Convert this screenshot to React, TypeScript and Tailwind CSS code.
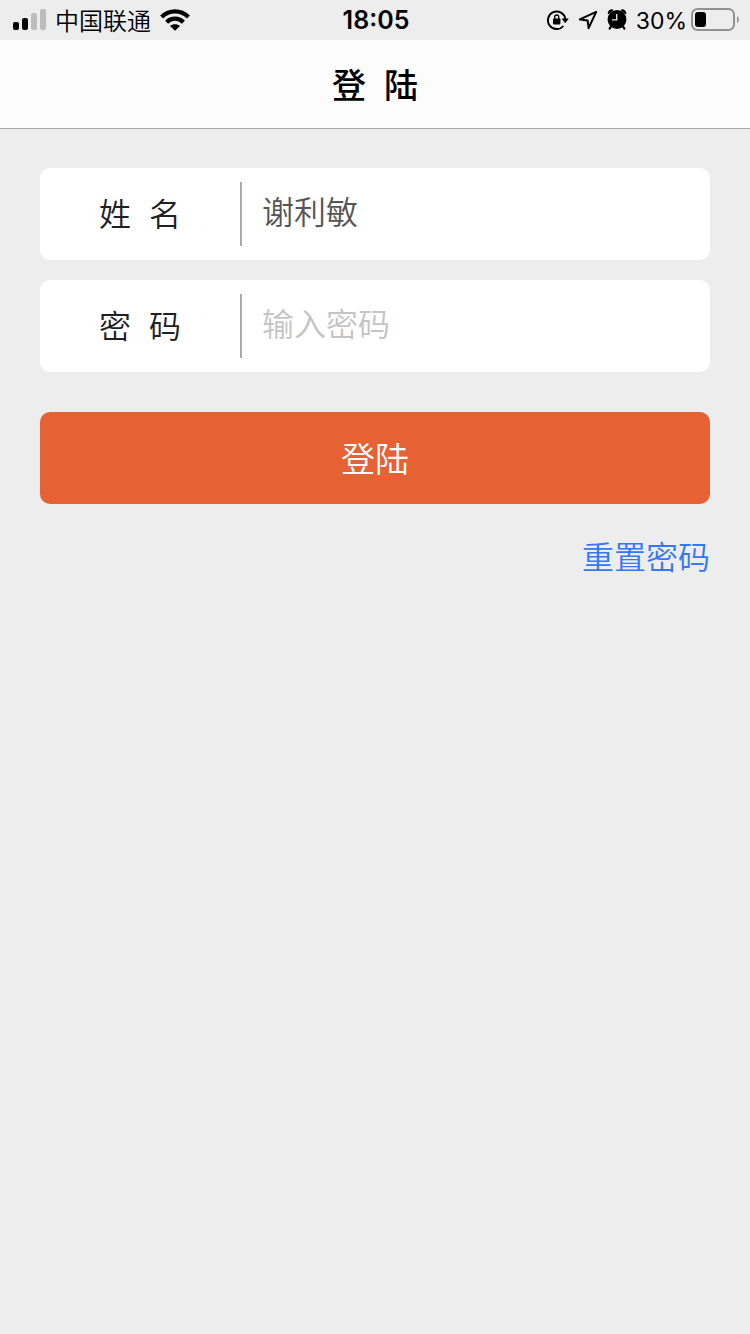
import { useState, type ReactNode } from "react";

function SignalIcon() {
  return (
    <svg viewBox="0 0 33 22" className="h-[22px] w-[33px]" aria-hidden="true">
      <rect x="0" y="13" width="6" height="8" rx="2" fill="#000" />
      <rect x="9" y="9" width="6" height="12" rx="2" fill="#000" />
      <rect x="18" y="4" width="6" height="17" rx="2" fill="#bdbdbd" />
      <rect x="27" y="0" width="6" height="21" rx="2" fill="#bdbdbd" />
    </svg>
  );
}

function WifiIcon() {
  return (
    <svg viewBox="0 0 30 22" className="h-[22px] w-[30px]" aria-hidden="true">
      <g fill="none" stroke="#000" strokeWidth="4.2">
        <path d="M1.6 8C9.4.4 20.6.4 28.4 8" />
        <path d="M6.6 13.2C11.3 8.5 18.7 8.5 23.4 13.2" />
      </g>
      <path d="M10 17.1C12.8 14.5 17.2 14.5 20 17.1L15 21.8Z" fill="#000" />
    </svg>
  );
}

function RotationLockIcon() {
  return (
    <svg viewBox="0 0 22 20" className="h-5 w-[22px]" aria-hidden="true">
      <path d="M16.4 16A8.8 8.8 0 1 1 18.4 8.8" fill="none" stroke="#000" strokeWidth="1.9" />
      <path d="M14.6 8.6h7.2l-3.6 4.7Z" fill="#000" />
      <rect x="6" y="8.4" width="7.4" height="6" rx=".8" fill="#000" />
      <path d="M7.7 9V7a2 2 0 0 1 4 0v2" fill="none" stroke="#000" strokeWidth="1.4" />
    </svg>
  );
}

function LocationIcon() {
  return (
    <svg viewBox="0 0 20 20" className="h-5 w-5" aria-hidden="true">
      <path d="M18.2 1.8 1.8 9.4l7.9 1.2.9 7.6Z" fill="none" stroke="#000" strokeWidth="2" strokeLinejoin="round" />
    </svg>
  );
}

function AlarmIcon() {
  return (
    <svg viewBox="0 0 20 22" className="h-[22px] w-5" aria-hidden="true">
      <circle cx="10" cy="10.5" r="9.4" fill="#000" />
      <path d="M.6 4.4A4.4 4.4 0 0 1 5.4.2L6.4 1.2 1.6 5.2ZM19.4 4.4A4.4 4.4 0 0 0 14.6.2L13.6 1.2 18.4 5.2Z" fill="#000" />
      <path d="M4.2 17.2 2.6 19.6M15.8 17.2l1.6 2.4" fill="none" stroke="#000" strokeWidth="2.1" strokeLinecap="round" />
      <path d="M9.7 5v5.8H5" fill="none" stroke="#ededed" strokeWidth="1.3" />
    </svg>
  );
}

function BatteryIcon() {
  return (
    <svg viewBox="0 0 48 24" className="h-6 w-12" aria-hidden="true">
      <rect x="1" y="1" width="42" height="21" rx="5.5" fill="none" stroke="#929292" strokeWidth="2" />
      <rect x="4" y="4" width="11" height="15" rx="3" fill="#000" />
      <path d="M46 8c2.4 1.6 2.4 5.6 0 7.2Z" fill="#929292" />
    </svg>
  );
}

function StatusBar() {
  return (
    <div className="grid h-10 grid-cols-[1fr_auto_1fr] items-center pr-[11px] pl-[13px] text-2xl text-black">
      <div className="flex items-center gap-[9px]">
        <SignalIcon />
        <span className="pt-1 font-[350]">中国联通</span>
        <WifiIcon />
      </div>
      <time className="pt-0.5 text-[25px] font-semibold">18:05</time>
      <div className="flex items-center justify-end gap-[9px]">
        <RotationLockIcon />
        <LocationIcon />
        <AlarmIcon />
        <div className="flex items-center gap-1">
          <span className="pt-0.5 text-[23px]">30%</span>
          <BatteryIcon />
        </div>
      </div>
    </div>
  );
}

function Field({ id, label, children }: { id: string; label: string; children: ReactNode }) {
  return (
    <div className="flex h-[92px] items-center rounded-[10px] bg-white">
      <label htmlFor={id} className="w-[200px] shrink-0 pt-0.5 text-center whitespace-pre text-[#202024]">
        {label}
      </label>
      <div className="h-16 min-w-0 grow border-l-2 border-[#aaaaaa] px-5">{children}</div>
    </div>
  );
}

export default function App() {
  const [name, setName] = useState("谢利敏");
  const [password, setPassword] = useState("");
  const inputClass =
    "block h-[62px] w-full bg-transparent leading-[62px] text-[#555555] outline-none placeholder:text-[#c4c4c4]";

  return (
    <div className="min-h-screen bg-[#ededed] font-['Inter','Noto_Sans_CJK_SC',sans-serif]">
      <StatusBar />
      <header className="flex h-[89px] items-center justify-center border-b border-[#a8a8a8] bg-[#fcfcfc]">
        <h1 className="pt-0.5 text-[34px] font-medium whitespace-pre text-black">登  陆</h1>
      </header>
      <main className="px-10 pt-[39px] text-[32px] font-[350]">
        <form onSubmit={(event) => event.preventDefault()}>
          <div className="flex flex-col gap-5">
            <Field id="name" label="姓  名">
              <input
                id="name"
                type="text"
                value={name}
                onChange={(event) => setName(event.target.value)}
                className={inputClass}
              />
            </Field>
            <Field id="password" label="密  码">
              <input
                id="password"
                type="password"
                placeholder="输入密码"
                value={password}
                onChange={(event) => setPassword(event.target.value)}
                className={inputClass}
              />
            </Field>
          </div>
          <button type="submit" className="mt-10 h-[92px] w-full rounded-[10px] bg-[#e66235] pt-0.5 text-[34px] text-white">
            登陆
          </button>
        </form>
        <div className="mt-[30px] flex justify-end">
          <a href="#reset" className="text-[#3478f6]">
            重置密码
          </a>
        </div>
      </main>
    </div>
  );
}
